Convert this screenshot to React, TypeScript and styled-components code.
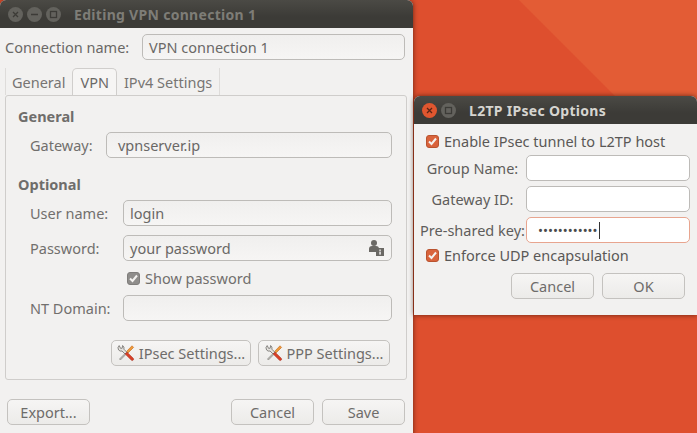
import React from 'react'
import styled, { createGlobalStyle } from 'styled-components'

const GlobalStyle = createGlobalStyle`
  html, body {
    margin: 0;
    padding: 0;
    width: 697px;
    height: 433px;
    overflow: hidden;
  }
  * {
    box-sizing: border-box;
  }
`

const Desktop = styled.div`
  position: relative;
  width: 697px;
  height: 433px;
  overflow: hidden;
  font-family: 'Noto Sans', sans-serif;
  font-size: 14.5px;
  color: #5c5a58;
  background: linear-gradient(45deg, #de4f2e 84.2%, #e35c35 84.3%);
`

const Window = styled.div<{ $left: number; $top: number; $width: number; $height: number }>`
  position: absolute;
  left: ${(p) => p.$left}px;
  top: ${(p) => p.$top}px;
  width: ${(p) => p.$width}px;
  height: ${(p) => p.$height}px;
  display: flex;
  flex-direction: column;
  background: #f2f1f0;
  border-radius: 6px 6px 0 0;
  box-shadow: 0 0 5px rgba(60, 20, 10, 0.75);
`

const TitleBar = styled.div`
  flex: none;
  height: 28px;
  display: flex;
  align-items: center;
  padding-left: 8px;
  background: linear-gradient(#4b4a45, #3c3b37 60%);
  border-radius: 6px 6px 0 0;
`

const WinButton = styled.span<{ $close?: boolean; $active?: boolean }>`
  width: 15px;
  height: 15px;
  margin-right: 4px;
  border-radius: 50%;
  display: flex;
  align-items: center;
  justify-content: center;
  background: ${(p) => (p.$close && p.$active ? '#e0562f' : '#63625d')};
  svg {
    display: block;
  }
`

const TitleText = styled.span<{ $active?: boolean }>`
  margin-left: 9px;
  font-weight: 700;
  font-size: 14px;
  letter-spacing: 0.3px;
  color: ${(p) => (p.$active ? '#d6d5d0' : '#7e7d77')};
`

const MainBody = styled.div`
  flex: 1;
  display: flex;
  flex-direction: column;
  padding: 6px 6px 8px 5px;
`

const NameRow = styled.div`
  display: grid;
  grid-template-columns: 137px 1fr;
  align-items: center;
  height: 26px;
  padding-right: 2px;
  color: #6a6866;
`

const Field = styled.div<{ $focus?: boolean; $white?: boolean; $pad?: number }>`
  flex: 1;
  height: 26px;
  display: flex;
  align-items: center;
  justify-content: space-between;
  padding: 0 ${(p) => p.$pad ?? 6}px;
  border: 1px solid ${(p) => (p.$focus ? '#e8a58f' : '#bdbbb8')};
  border-radius: 5px;
  color: #6a6866;
  background: ${(p) => (p.$white ? '#fff' : 'linear-gradient(#f0efee, #f6f5f4)')};
`

const TabStrip = styled.div`
  display: flex;
  height: 27px;
  margin-top: 8px;
`

const Tab = styled.div<{ $active?: boolean }>`
  display: flex;
  align-items: center;
  justify-content: center;
  height: 27px;
  padding: 0 7px;
  color: ${(p) => (p.$active ? '#6a6866' : '#777573')};
  &:first-child {
    padding-left: 6px;
    border-left: 1px solid #dedcda;
  }
  &:last-child {
    border-right: 1px solid #dedcda;
  }
  ${(p) =>
    p.$active &&
    `
    background: #f6f5f4;
    border: 1px solid #d0cecc;
    border-bottom: none;
    border-radius: 5px 5px 0 0;
  `}
`

const Panel = styled.div`
  height: 285px;
  padding: 11px 14px 0 12px;
  border: 1px solid #cfcdcb;
  border-radius: 3px;
  display: flex;
  flex-direction: column;
`

const Heading = styled.div<{ $top?: number }>`
  height: 18px;
  line-height: 18px;
  margin-top: ${(p) => p.$top ?? 0}px;
  font-weight: 700;
  color: #6f6d6b;
`

const Row = styled.div<{ $labelWidth: number; $top: number }>`
  display: grid;
  grid-template-columns: ${(p) => p.$labelWidth}px 1fr;
  align-items: center;
  height: 26px;
  margin-top: ${(p) => p.$top}px;
  padding-left: 12px;
  color: #716f6d;
`

const CheckRow = styled.div<{ $indent: number; $top: number; $strong?: boolean }>`
  display: flex;
  align-items: center;
  gap: 5px;
  height: 18px;
  margin-top: ${(p) => p.$top}px;
  padding-left: ${(p) => p.$indent}px;
  color: ${(p) => (p.$strong ? '#5a5856' : '#716f6d')};
`

const CheckBox = styled.span<{ $accent?: boolean }>`
  width: 13px;
  height: 13px;
  border-radius: 3px;
  display: flex;
  align-items: center;
  justify-content: center;
  background: ${(p) => (p.$accent ? '#d9633c' : '#8f8d8b')};
  border: 1px solid ${(p) => (p.$accent ? '#b9532f' : '#7f7d7b')};
`

const SettingsRow = styled.div`
  display: flex;
  justify-content: flex-end;
  gap: 7px;
  margin-top: 19px;
  padding-right: 2px;
`

const Button = styled.div<{ $width: number }>`
  width: ${(p) => p.$width}px;
  height: 26px;
  display: flex;
  align-items: center;
  justify-content: center;
  gap: 4px;
  white-space: nowrap;
  border: 1px solid #c4c2bf;
  border-radius: 5px;
  color: #6e6c6a;
  background: linear-gradient(#f6f5f4, #ecebe9);
`

const Footer = styled.div`
  display: flex;
  gap: 8px;
  margin-top: 19px;
  padding: 0 2px;
`

const Spacer = styled.div`
  flex: 1;
`

const DialogBody = styled.div`
  flex: 1;
  display: flex;
  flex-direction: column;
  padding: 8px 7px 0 5px;
`

const DialogRow = styled.div<{ $top: number }>`
  display: grid;
  grid-template-columns: 107px 1fr;
  align-items: center;
  height: 26px;
  margin-top: ${(p) => p.$top}px;
  color: #5f5d5b;
`

const CenterLabel = styled.span`
  text-align: center;
  white-space: nowrap;
`

const DialogFooter = styled.div`
  display: flex;
  justify-content: flex-end;
  gap: 8px;
  margin-top: 9px;
  padding-right: 5px;
`

const SecretField = styled(Field)`
  justify-content: flex-start;
`

const Caret = styled.span`
  width: 1px;
  height: 17px;
  margin-left: 1px;
  background: #333;
`

const Secret = styled.span`
  display: flex;
  align-items: center;
  font-size: 13.2px;
  color: #4a4a4a;
`

const Tick = () => (
  <svg width="11" height="11" viewBox="0 0 11 11">
    <path d="M2 5.5 L4.5 8 L9 2.5" fill="none" stroke="#f4f2f0" strokeWidth="2" />
  </svg>
)

// crossed wrench and screwdriver
const ToolsIcon = () => (
  <svg width="18" height="18" viewBox="0 0 18 18">
    <path d="M9.5 7.5 L15 1.8 L16.6 3.4 L11 9 Z" fill="#ee9a3a" stroke="#c9722a" strokeWidth="0.7" />
    <path d="M9.5 8 L2.5 15 L3.4 16 L10.4 9 Z" fill="#bdbbb7" stroke="#8a8884" strokeWidth="0.7" />
    <path d="M2.2 1.6 A3.4 3.4 0 0 0 1.6 6 A3.2 3.2 0 0 0 5 7 L8 10 L9.8 8.2 L6.9 5.2 A3.3 3.3 0 0 0 5.6 1.5 L5.2 4.2 L3.6 4.4 Z" fill="#e4e2de" stroke="#7d7b77" strokeWidth="0.9" />
    <path d="M8.2 10 L10 8.2 L16.2 14.2 A1.3 1.3 0 0 1 14.3 16.1 Z" fill="#d93f27" stroke="#a9301e" strokeWidth="0.6" />
  </svg>
)

const KeyOwnerIcon = () => (
  <svg width="17" height="18" viewBox="0 0 17 18">
    <circle cx="6" cy="4" r="3" fill="#6b6965" />
    <path d="M1 13 V10 a3 3 0 0 1 3 -3 H8 a3 3 0 0 1 3 3 V13 Z" fill="#6b6965" />
    <rect x="8" y="9" width="8" height="8" fill="#6b6965" />
    <rect x="11.3" y="10.5" width="1.5" height="1.4" fill="#f2f1f0" />
    <rect x="11.3" y="12.6" width="1.5" height="3" fill="#f2f1f0" />
  </svg>
)

const Glyph = ({ kind, color }: { kind: 'close' | 'min' | 'max'; color: string }) => (
  <svg width="9" height="9" viewBox="0 0 9 9">
    {kind === 'close' && <path d="M2 2 L7 7 M7 2 L2 7" stroke={color} strokeWidth="1.3" />}
    {kind === 'min' && <path d="M1 4.5 H8" stroke={color} strokeWidth="1.5" />}
    {kind === 'max' && <rect x="1.5" y="1.5" width="6" height="6" fill="none" stroke={color} strokeWidth="1.3" />}
  </svg>
)

export default function App() {
  return (
    <Desktop>
      <GlobalStyle />
      <Window $left={0} $top={0} $width={413} $height={440}>
        <TitleBar>
          <WinButton><Glyph kind="close" color="#3c3b37" /></WinButton>
          <WinButton><Glyph kind="min" color="#3c3b37" /></WinButton>
          <WinButton><Glyph kind="max" color="#3c3b37" /></WinButton>
          <TitleText>Editing VPN connection 1</TitleText>
        </TitleBar>
        <MainBody>
          <NameRow>
            <span>Connection name:</span>
            <Field>VPN connection 1</Field>
          </NameRow>
          <TabStrip>
            <Tab>General</Tab>
            <Tab $active>VPN</Tab>
            <Tab>IPv4 Settings</Tab>
          </TabStrip>
          <Panel>
            <Heading>General</Heading>
            <Row $labelWidth={76} $top={7}>
              <span>Gateway:</span>
              <Field $pad={11}>vpnserver.ip</Field>
            </Row>
            <Heading $top={17}>Optional</Heading>
            <Row $labelWidth={93} $top={7}>
              <span>User name:</span>
              <Field>login</Field>
            </Row>
            <Row $labelWidth={93} $top={9}>
              <span>Password:</span>
              <Field>
                your password
                <KeyOwnerIcon />
              </Field>
            </Row>
            <CheckRow $indent={109} $top={8}>
              <CheckBox><Tick /></CheckBox>
              Show password
            </CheckRow>
            <Row $labelWidth={93} $top={8}>
              <span>NT Domain:</span>
              <Field />
            </Row>
            <SettingsRow>
              <Button $width={140}><ToolsIcon />IPsec Settings...</Button>
              <Button $width={132}><ToolsIcon />PPP Settings...</Button>
            </SettingsRow>
          </Panel>
          <Footer>
            <Button $width={83}>Export...</Button>
            <Spacer />
            <Button $width={83}>Cancel</Button>
            <Button $width={83}>Save</Button>
          </Footer>
        </MainBody>
      </Window>

      <Window $left={414} $top={96} $width={283} $height={219}>
        <TitleBar>
          <WinButton $close $active><Glyph kind="close" color="#5a2415" /></WinButton>
          <WinButton><Glyph kind="max" color="#3c3b37" /></WinButton>
          <TitleText $active>L2TP IPsec Options</TitleText>
        </TitleBar>
        <DialogBody>
          <CheckRow $indent={7} $top={0} $strong>
            <CheckBox $accent><Tick /></CheckBox>
            Enable IPsec tunnel to L2TP host
          </CheckRow>
          <DialogRow $top={5}>
            <CenterLabel>Group Name:</CenterLabel>
            <Field $white />
          </DialogRow>
          <DialogRow $top={5}>
            <CenterLabel>Gateway ID:</CenterLabel>
            <Field $white />
          </DialogRow>
          <DialogRow $top={5}>
            <CenterLabel>Pre-shared key:</CenterLabel>
            <SecretField $white $focus $pad={11}>
              <Secret>••••••••••••</Secret>
              <Caret />
            </SecretField>
          </DialogRow>
          <CheckRow $indent={7} $top={3} $strong>
            <CheckBox $accent><Tick /></CheckBox>
            Enforce UDP encapsulation
          </CheckRow>
          <DialogFooter>
            <Button $width={83}>Cancel</Button>
            <Button $width={83}>OK</Button>
          </DialogFooter>
        </DialogBody>
      </Window>
    </Desktop>
  )
}
